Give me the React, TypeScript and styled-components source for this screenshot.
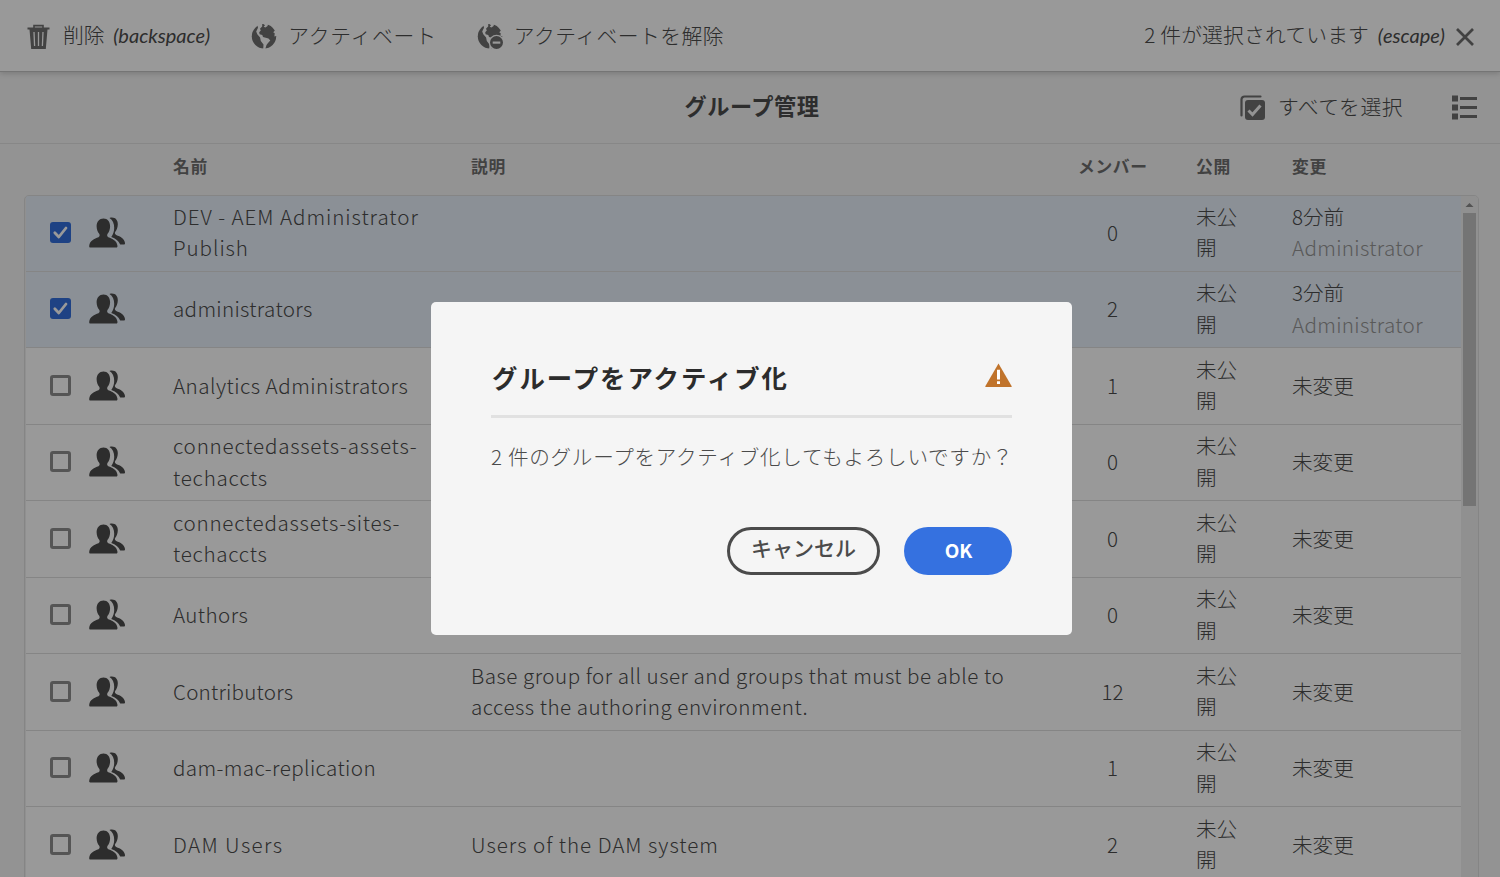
import React from "react";
import styled, { createGlobalStyle } from "styled-components";

const cjk = `"Noto Sans CJK JP", sans-serif`;

const GlobalStyle = createGlobalStyle`
  *, *::before, *::after { box-sizing: border-box; }
  html, body { margin: 0; padding: 0; }
  body {
    background: #f5f5f5;
    color: #4b4b4b;
    font-family: ${cjk};
    font-weight: 300;
    overflow: hidden;
  }
`;

const Page = styled.div`
  position: relative;
  display: flex;
  flex-direction: column;
  width: 1500px;
  height: 877px;
  overflow: hidden;
  background: #f5f5f5;
`;

const ActionBar = styled.header`
  position: relative;
  z-index: 1;
  display: flex;
  align-items: center;
  flex: 0 0 72px;
  padding: 2px 25px 0 26px;
  background: #fff;
  border-bottom: 1px solid #c4c4c4;
  box-shadow: 0 1px 6px rgba(0, 0, 0, 0.2);
  font-size: 20.8px;
  line-height: 30px;
`;

const Action = styled.button<{ $gap: number; $after: number }>`
  display: flex;
  align-items: center;
  gap: ${(p) => p.$gap}px;
  margin: 0 ${(p) => p.$after}px 0 0;
  padding: 0;
  border: 0;
  background: none;
  color: inherit;
  font: inherit;
  white-space: nowrap;
`;

const Label = styled.span<{ $track?: number; $lift?: number }>`
  padding-bottom: ${(p) => p.$lift ?? 4}px;
  letter-spacing: ${(p) => p.$track ?? 0}px;
`;

const Shortcut = styled.i`
  margin-left: 4px;
  font-family: "Lato", "Open Sans", sans-serif;
  font-size: 20px;
  font-weight: 400;
  font-style: italic;
  letter-spacing: 0;
`;

const Selection = styled.div`
  display: flex;
  align-items: center;
  gap: 10px;
  margin-left: auto;
  white-space: nowrap;
`;

const TitleBar = styled.div`
  display: grid;
  grid-template-columns: 1fr auto 1fr;
  align-items: center;
  flex: 0 0 72px;
  padding: 0 23px 0 27px;
  border-bottom: 1px solid #e1e1e1;
`;

const PageTitle = styled.h1`
  grid-column: 2;
  margin: 0;
  padding-bottom: 5px;
  font-size: 22.2px;
  line-height: 32px;
  font-weight: 700;
  letter-spacing: 0.5px;
`;

const TitleTools = styled.div`
  grid-column: 3;
  justify-self: end;
  display: flex;
  align-items: center;
  font-size: 20.8px;
`;

const columns = `24px 39px 84px 298px 587px 138px 96px 1fr`;

const TableHead = styled.div`
  display: grid;
  grid-template-columns: ${columns};
  align-items: center;
  flex: 0 0 51px;
  padding: 0 38px 7px 26px;
  color: #6e6e6e;
  font-size: 16.8px;
  font-weight: 700;
  letter-spacing: 0.6px;
`;

const HeadCell = styled.div<{ $col: number; $end?: boolean }>`
  grid-column: ${(p) => p.$col};
  margin-left: ${(p) => (p.$end ? 20 : 0)}px;
  white-space: nowrap;
`;

const TableFrame = styled.section`
  display: flex;
  margin: 0 21px 0 24px;
  padding-left: 1px;
  flex: 0 0 700px;
  background: #f1f1f1;
  border: 1px solid #dedede;
  border-radius: 5px;
  overflow: hidden;
`;

const Rows = styled.div`
  flex: 1;
  margin-top: -0.6px;
`;

const Row = styled.div<{ $selected: boolean }>`
  display: grid;
  grid-template-columns: ${columns};
  align-items: center;
  height: 76.5px;
  border-bottom: 1px solid #dedede;
  background: ${(p) => (p.$selected ? "#e8f0fa" : "#fff")};
  font-size: 20.6px;
  line-height: 31.2px;
`;

const Cell = styled.div<{ $col: number; $track?: number }>`
  grid-column: ${(p) => p.$col};
  padding-bottom: 2px;
  white-space: pre-line;
  letter-spacing: ${(p) => p.$track ?? 0}px;
`;

const Members = styled(Cell)`
  padding-left: 29.5px;
`;

const Count = styled.span`
  display: block;
  width: 50px;
  text-align: center;
`;

const Author = styled.div`
  color: #959595;
  letter-spacing: 0.33px;
`;

const Box = styled.span<{ $on: boolean }>`
  grid-column: 2;
  display: flex;
  width: 21px;
  height: 21px;
  margin-bottom: 2px;
  border: ${(p) => (p.$on ? "0" : "3px solid #8e8e8e")};
  border-radius: 3px;
  background: ${(p) => (p.$on ? "#326edc" : "#fff")};
`;

const GroupGlyph = styled.svg`
  display: block;
  margin-bottom: 2px;
`;

const ScrollTrack = styled.div`
  display: flex;
  flex-direction: column;
  align-items: center;
  flex: 0 0 17px;
  background: #f1f1f1;
`;

const ScrollArrow = styled.svg`
  width: 17px;
  height: 17px;
  display: block;
`;

const ScrollThumb = styled.div`
  width: 13px;
  height: 293px;
  background: #c1c1c1;
`;

const Backdrop = styled.div`
  position: absolute;
  inset: 0;
  z-index: 2;
  display: flex;
  align-items: flex-start;
  justify-content: center;
  padding: 302px 0 0 3px;
  background: rgba(0, 0, 0, 0.4);
`;

const Dialog = styled.div`
  display: flex;
  flex-direction: column;
  width: 641px;
  height: 333px;
  padding: 57px 60px 60px;
  background: #f5f5f5;
  border-radius: 5px;
`;

const DialogHeader = styled.div`
  display: flex;
  justify-content: space-between;
  align-items: flex-start;
  height: 59px;
  border-bottom: 3px solid #e1e1e1;
`;

const DialogTitle = styled.h2`
  margin: 0 0 0 1px;
  color: #2c2c2c;
  font-size: 25.4px;
  line-height: 36px;
  font-weight: 700;
  letter-spacing: 2px;
  white-space: nowrap;
`;

const AlertGlyph = styled.svg`
  margin-top: 4px;
`;

const DialogText = styled.p`
  margin: 23px 0 0;
  font-size: 20.6px;
  line-height: 31px;
  letter-spacing: 0.7px;
  white-space: nowrap;
`;

const DialogActions = styled.div`
  display: flex;
  justify-content: flex-end;
  gap: 24px;
  margin-top: auto;
`;

const DialogButton = styled.button<{ $primary?: boolean }>`
  height: 48px;
  width: ${(p) => (p.$primary ? 108 : 153)}px;
  padding: ${(p) => (p.$primary ? "0 0 4px 1px" : "0 0 8px")};
  border: ${(p) => (p.$primary ? "0" : "3px solid #4b4b4b")};
  border-radius: 24px;
  background: ${(p) => (p.$primary ? "#3571e0" : "transparent")};
  color: ${(p) => (p.$primary ? "#fff" : "#4b4b4b")};
  font-family: ${cjk};
  font-size: ${(p) => (p.$primary ? 19 : 21)}px;
  font-weight: ${(p) => (p.$primary ? 700 : 500)};
`;

const TrashIcon = () => (
  <svg width="25" height="26" viewBox="0 0 25 26" fill="none">
    <path d="M8 4V1.6h9V4" stroke="#6e6e6e" strokeWidth="1.6" />
    <path d="M1.5 3.6h22v2h-2L19.8 25H5.2L3.500 5.600h-2z" fill="#6e6e6e" />
    <path d="M8 8l.6 14M12.500 8v14M17 8l-.6 14" stroke="#fff" strokeWidth="1.300" />
  </svg>
);

const GlobeIcon = ({ remove = false }: { remove?: boolean }) => (
  <svg width="27" height="27" viewBox="0 0 27 27" fill="#6e6e6e">
    <circle cx="13" cy="13.300" r="12.200" />
    <path d="M6 1 11 .8l.3 2.400L9 5.700l.8 1.900-1.600 1.600.4 2 2.700.7.700 2L17.500 15.500l1.800 2-2.300 2.500-1.500 2-1.300 4.200h-2l.3-4.700-2.700-3.500-.7-3.500L6.300 11.200 5.200 8.500 7 4.700z" fill="#fff" />
    <path d="M11.500.3l2.500 1.900-1.300 1.500 1.700.8L16.600 3l.4-2.500zM26 8.300l-2.500-.3-1.300 1.300 1.500 1-.3 3.200 2.600-.8z" fill="#fff" />
    {remove && (
      <>
        <circle cx="19.500" cy="19.500" r="7.700" fill="#fff" />
        <circle cx="19.500" cy="19.500" r="6.500" />
        <path d="M15.700 18.500h7.600v2.200h-7.600z" fill="#fff" />
      </>
    )}
  </svg>
);

const CloseIcon = () => (
  <svg width="20" height="20" viewBox="0 0 20 20" stroke="#6e6e6e" strokeWidth="2.700">
    <path d="M2 2l16 16M18 2L2 18" />
  </svg>
);

const SelectAllIcon = () => (
  <svg width="26" height="26" viewBox="0 0 26 26" fill="none">
    <path d="M1.500 20.500V4.500a3 3 0 0 1 3-3h16" stroke="#6e6e6e" strokeWidth="2.200" strokeLinecap="round" />
    <rect x="5" y="5" width="20" height="20" rx="3" fill="#6e6e6e" />
    <path d="M8.500 15.500l4 4 8-9" stroke="#f5f5f5" strokeWidth="3" />
  </svg>
);

const ListIcon = () => (
  <svg width="25" height="25" viewBox="0 0 25 25" fill="#6e6e6e">
    <path d="M0 .5h6v6H0zM0 9.500h6v6H0zM0 18.500h6v6H0zM8 2h17v3H8zM8 11h17v3H8zM8 20h17v3H8z" />
  </svg>
);

const GroupIcon = () => (
  <GroupGlyph width="37" height="31" viewBox="0 0 37 31" fill="#4b4b4b">
    <path d="M14.500 1.400c4.100 0 6.600 3.300 6.600 7.800 0 3.400-1.200 5.800-2.500 7.600-.8 1.100-.5 2.800.7 3.400 4 1.600 8.700 3.300 9.200 8.800 0 .9-.3 1.500-1.100 1.500H1.200C.4 30.500.100 29.900.200 29c.4-5.500 5.300-7.200 9.300-8.800 1.200-.6 1.500-2.300.7-3.400-1.300-1.800-2.600-4.200-2.600-7.600 0-4.500 2.800-7.800 6.900-7.800z" />
    <path d="M20.500.9c5.500-1.400 8.400 1.900 8.300 6.600-.1 3.400-1.300 5.500-2.500 7.300-.8 1.200-.4 2.600.9 3.200 4.300 1.600 8.300 3.700 8.800 8 .1 1-.4 1.500-1.200 1.500h-3.600c-1.500-3.500-4.600-5.900-8.900-7.400 2-3.100 2.900-5.700 2.900-9.300 0-4.500-1.500-7.800-4.700-9.900z" />
  </GroupGlyph>
);

const AlertIcon = () => (
  <AlertGlyph width="27" height="25" viewBox="0 0 27 25">
    <path d="M13.500.5 26.700 23.200q.3.800-.5.800H.8q-.8 0-.5-.8z" fill="#c0732b" />
    <path d="M12 6.800h3v9.800h-3zM12 18.300h3V21h-3z" fill="#fff" />
  </AlertGlyph>
);

const Check = () => (
  <svg width="21" height="21" viewBox="0 0 21 21" fill="none">
    <path d="M4.800 10.800l4 4.200 7.200-9" stroke="#fff" strokeWidth="2.800" strokeLinecap="round" strokeLinejoin="round" />
  </svg>
);

type Group = {
  name: string;
  track: number;
  description?: string;
  descTrack?: number;
  members: number;
  modified?: string;
};

const groups: Group[] = [
  { name: "DEV - AEM Administrator\nPublish", track: 0.94, members: 0, modified: "8分前" },
  { name: "administrators", track: 0.33, members: 2, modified: "3分前" },
  { name: "Analytics Administrators", track: 0.48, members: 1 },
  { name: "connectedassets-assets-\ntechaccts", track: 0.78, members: 0 },
  { name: "connectedassets-sites-\ntechaccts", track: 0.72, members: 0 },
  { name: "Authors", track: 0.4, members: 0 },
  {
    name: "Contributors",
    track: 0.22,
    description: "Base group for all user and groups that must be able to\naccess the authoring environment.",
    descTrack: 0.5,
    members: 12,
  },
  { name: "dam-mac-replication", track: 0.4, members: 1 },
  { name: "DAM Users", track: 1.38, description: "Users of the DAM system", descTrack: 0.97, members: 2 },
];

export default function App() {
  return (
    <>
      <GlobalStyle />
      <Page>
        <ActionBar>
          <Action $gap={12} $after={41}>
            <TrashIcon />
            <Label>削除 <Shortcut>(backspace)</Shortcut></Label>
          </Action>
          <Action $gap={10} $after={40}>
            <GlobeIcon />
            <Label $track={0.75}>アクティベート</Label>
          </Action>
          <Action $gap={10} $after={0}>
            <GlobeIcon remove />
            <Label $track={0.45}>アクティベートを解除</Label>
          </Action>
          <Selection>
            <Label $track={0.15}>2 件が選択されています <Shortcut>(escape)</Shortcut></Label>
            <CloseIcon />
          </Selection>
        </ActionBar>
        <TitleBar>
          <PageTitle>グループ管理</PageTitle>
          <TitleTools>
            <Action $gap={12} $after={49}>
              <SelectAllIcon />
              <Label $track={0.5}>すべてを選択</Label>
            </Action>
            <ListIcon />
          </TitleTools>
        </TitleBar>
        <TableHead>
          <HeadCell $col={4}>名前</HeadCell>
          <HeadCell $col={5}>説明</HeadCell>
          <HeadCell $col={6} $end>メンバー</HeadCell>
          <HeadCell $col={7}>公開</HeadCell>
          <HeadCell $col={8}>変更</HeadCell>
        </TableHead>
        <TableFrame>
          <Rows>
            {groups.map((g) => (
              <Row key={g.name} $selected={!!g.modified}>
                <Box $on={!!g.modified}>{g.modified && <Check />}</Box>
                <GroupIcon />
                <Cell $col={4} $track={g.track}>{g.name}</Cell>
                <Cell $col={5} $track={g.descTrack}>{g.description}</Cell>
                <Members $col={6}><Count>{g.members}</Count></Members>
                <Cell $col={7}>{"未公\n開"}</Cell>
                <Cell $col={8}>
                  {g.modified ?? "未変更"}
                  {g.modified && <Author>Administrator</Author>}
                </Cell>
              </Row>
            ))}
          </Rows>
          <ScrollTrack>
            <ScrollArrow viewBox="0 0 17 17"><path d="M4.500 11 8.500 7l4 4z" fill="#8a8a8a" /></ScrollArrow>
            <ScrollThumb />
          </ScrollTrack>
        </TableFrame>
        <Backdrop>
          <Dialog role="dialog">
            <DialogHeader>
              <DialogTitle>グループをアクティブ化</DialogTitle>
              <AlertIcon />
            </DialogHeader>
            <DialogText>2 件のグループをアクティブ化してもよろしいですか？</DialogText>
            <DialogActions>
              <DialogButton>キャンセル</DialogButton>
              <DialogButton $primary>OK</DialogButton>
            </DialogActions>
          </Dialog>
        </Backdrop>
      </Page>
    </>
  );
}
